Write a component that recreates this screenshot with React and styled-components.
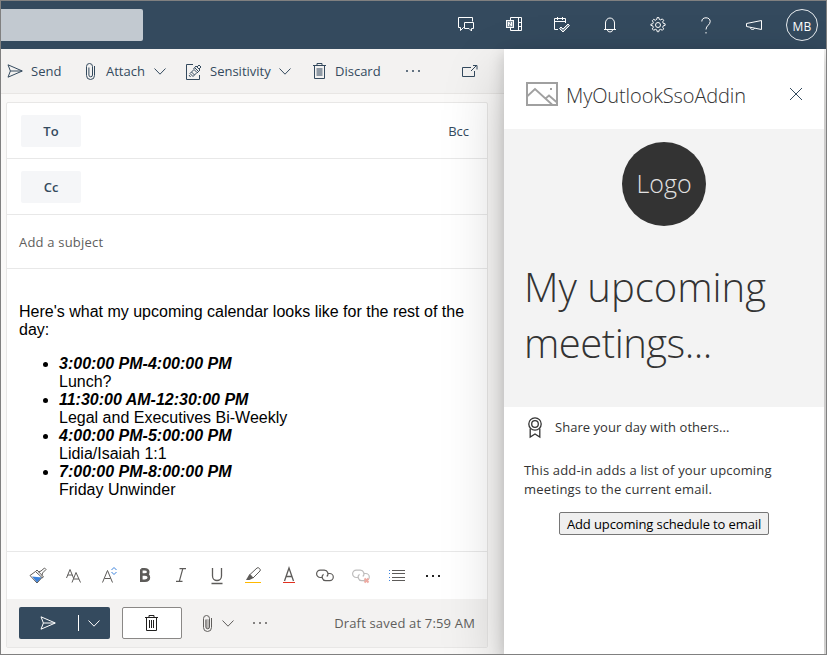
import React from "react";
import styled, { createGlobalStyle } from "styled-components";

const Global = createGlobalStyle`
  * { box-sizing: border-box; }
  body { margin: 0; overflow: hidden; }
  button { font: inherit; padding: 0; border: 0; background: none; color: inherit; }
`;

const Frame = styled.div`
  width: 827px;
  height: 655px;
  border: 1px solid #808080;
  display: flex;
  flex-direction: column;
  overflow: hidden;
  background: #faf9f8;
  color: #344a5e;
  font-family: "Open Sans", "Noto Sans", sans-serif;
  font-size: 13px;
`;
const Header = styled.header`
  height: 48px;
  flex: none;
  background: #344a5e;
  display: flex;
  align-items: center;
  justify-content: space-between;
`;
const SearchBox = styled.div`
  width: 142px;
  height: 32px;
  border-radius: 0 2px 2px 0;
  background: #c2c9d0;
`;
const HeaderIcons = styled.nav`display: flex;`;
const HeaderButton = styled.button`
  width: 48px;
  height: 48px;
  display: flex;
  align-items: center;
  justify-content: center;
  color: #fff;
`;
const Avatar = styled.span`
  width: 32px;
  height: 32px;
  border: 1px solid #e9edf0;
  border-radius: 50%;
  font-size: 12px;
  line-height: 33px;
  text-align: center;
  letter-spacing: 0.2px;
`;
const Main = styled.main`
  flex: 1;
  min-height: 0;
  display: flex;
`;
const Compose = styled.section`
  width: 503px;
  flex: none;
  display: flex;
  flex-direction: column;
`;
const CommandBar = styled.div`
  height: 45px;
  flex: none;
  display: flex;
  align-items: center;
  padding-left: 6px;
  background: #f3f2f1;
  border-bottom: 1px solid #e8e6e4;
`;
const Command = styled.button`
  width: ${(p) => p.$w}px;
  height: 44px;
  display: flex;
  align-items: center;
  flex: none;
`;
const CommandLabel = styled.span`
  width: ${(p) => p.$w}px;
  margin-left: ${(p) => p.$gap}px;
  text-align: left;
  white-space: nowrap;
  line-height: 18px;
`;
const Svg = styled.svg`
  display: block;
  flex: none;
  fill: none;
  stroke: currentColor;
  stroke-width: 1;
  overflow: visible;
`;
const Card = styled.div`
  width: 482px;
  height: 546px;
  margin: 8px 0 0 5px;
  border: 1px solid #e8e7e6;
  border-radius: 2px;
  background: #fff;
  display: flex;
  flex-direction: column;
`;
const FieldRow = styled.div`
  height: ${(p) => p.$h}px;
  flex: none;
  border-bottom: 1px solid #e8e8e8;
  display: flex;
  align-items: center;
  justify-content: space-between;
  padding: 0 18px 0 ${(p) => p.$left}px;
`;
const Recipient = styled.button`
  width: 60px;
  height: 32px;
  border-radius: 2px;
  background: #f5f6f8;
  font-weight: 600;
`;
const Subject = styled.span`
  color: #605e5c;
  letter-spacing: 0.2px;
`;
const Message = styled.article`
  flex: 1;
  padding: 34px 12px 0;
  border-bottom: 1px solid #e8e8e8;
  color: #000;
  font: 16px/18px "Liberation Sans", Arial, sans-serif;
`;
const Intro = styled.p`margin: 0 0 16px;`;
const Meetings = styled.ul`margin: 0; padding-left: 40px;`;
const When = styled.strong`display: block; font-style: italic;`;
const FormatBar = styled.div`
  height: 47px;
  flex: none;
  display: flex;
  align-items: center;
  padding-left: 13px;
  color: #5d5b59;
`;
const FormatButton = styled.button`
  width: 35.9px;
  height: 47px;
  display: flex;
  align-items: center;
  justify-content: center;
`;
const Footer = styled.footer`
  height: 48px;
  flex: none;
  display: flex;
  align-items: center;
  padding: 0 12px;
  background: #f3f2f1;
  color: #605e5c;
`;
const SendButton = styled.button`
  width: 91px;
  height: 32px;
  display: flex;
  align-items: center;
  padding-left: 21px;
  border-radius: 2px;
  background: #344a5e;
  color: #fff;
`;
const SendDivider = styled.span`
  width: 1px;
  height: 16px;
  margin: 0 9px 0 22px;
  background: #fff;
`;
const DiscardButton = styled.button`
  width: 60px;
  height: 32px;
  margin: 0 21px 0 12px;
  border: 1px solid #8a8886;
  border-radius: 2px;
  background: #fff;
  color: #201f1e;
  display: flex;
  align-items: center;
  justify-content: center;
  padding-right: 1px;
`;
const FooterItem = styled.button`
  width: ${(p) => p.$w}px;
  height: 32px;
  display: flex;
  align-items: center;
`;
const DraftStatus = styled.span`
  margin-left: auto;
  letter-spacing: 0.17px;
`;
const AddinPane = styled.aside`
  position: relative;
  width: 320px;
  flex: none;
  background: #fff;
  color: #333;
  box-shadow: 0 25.6px 57.6px rgba(0, 0, 0, 0.22), 0 4.8px 14.4px rgba(0, 0, 0, 0.18);
  clip-path: inset(-48px -3px 0 -80px);
`;
const PaneHeader = styled.div`
  height: 80px;
  display: flex;
  align-items: center;
  padding: 10px 22px 0 22px;
`;
const PaneTitle = styled.h2`
  flex: 1;
  margin: 4px 0 0 8px;
  font-size: 20px;
  line-height: 28px;
  font-weight: 300;
  letter-spacing: -0.12px;
  white-space: nowrap;
`;
const CloseButton = styled.button`color: #344a5e;`;
const Welcome = styled.div`
  height: 278px;
  background: #f3f3f3;
  padding: 13px 20px 0;
`;
const Logo = styled.div`
  width: 84px;
  height: 84px;
  margin: 0 auto;
  border-radius: 50%;
  background: #333;
  color: #e2e2e2;
  font-size: 25px;
  font-weight: 300;
  line-height: 82px;
  text-align: center;
`;
const Title = styled.h1`
  margin: 33px 0 0;
  font-size: 40px;
  line-height: 56px;
  font-weight: 300;
  white-space: nowrap;
`;
const TitleLine = styled.span`
  display: block;
  letter-spacing: ${(p) => p.$ls}px;
`;
const Feature = styled.div`
  height: 40px;
  padding-left: 24px;
  display: flex;
  align-items: center;
`;
const FeatureText = styled.span`
  margin-left: 13px;
  letter-spacing: 0.04px;
`;
const Description = styled.p`
  margin: 14px 20px 13px;
  line-height: 19px;
  white-space: nowrap;
  letter-spacing: 0.17px;
`;
const AddButton = styled.button`
  display: block;
  width: 210px;
  height: 23px;
  margin: 0 auto;
  padding-top: 1px;
  border: 1px solid #767676;
  border-radius: 2px;
  background: #efefef;
  color: #000;
  line-height: 20px;
  letter-spacing: -0.12px;
  white-space: nowrap;
`;

const Icon = ({ w = 16, h = 16, children }) => (
  <Svg width={w} height={h} viewBox={`0 0 ${w} ${h}`}>{children}</Svg>
);
const SendIcon = () => (
  <Icon h={14}><path d="M1 .8 15.3 7 1 13.2 3.4 7ZM3.4 7H15" /></Icon>
);
const Chevron = () => <Icon w={12} h={7}><path d="m.5.5 5.5 5.7L11.5.5" /></Icon>;
const Clip = ({ filled }) => (
  <Icon w={9} h={17}>
    {filled && <rect x="2.5" y="4" width="4" height="10" rx="2" fill="#bdbbb9" stroke="none" />}
    <path d="M8.5 3v9.5a4 4 0 0 1-8 0V3.5a3 3 0 0 1 6 0V12a1.8 1.8 0 0 1-3.6 0V4.5" />
  </Icon>
);
const Dots = ({ strong }) => (
  <Icon h={2}>
    <path stroke={strong ? "#222" : "currentColor"} strokeWidth={strong ? 2 : 1.6} d="M1 1h2M7 1h2M13 1h2" />
  </Icon>
);
const Sensitivity = () => (
  <Icon w={16} h={17}>
    <path d="M7 1.5H.5v15h13V12M4 10.5l4-4 3 3-4 4ZM5.5 9l3 3M3 12l1.5 2M7.5 6 10 3l1 1 2-2 2 2-2 2 1 1-3 3M9 5l3.5 3.5M11 4l2 2" />
  </Icon>
);
const TrashFilled = () => (
  <Icon w={13} h={16}>
    <rect x="3.5" y="5" width="6" height="8" fill="#8f9aa5" stroke="none" />
    <path d="M0 2.5h13M4 2.5V.5h5v2M1.5 2.5v13h10v-13" />
  </Icon>
);
const Trash = () => (
  <Icon w={13} h={16}><path d="M0 2.5h13M4 2.5V.5h5v2M1.5 2.5v13h10v-13M4.5 5v8M6.5 5v8M8.5 5v8" /></Icon>
);
const PopOut = () => (
  <Icon w={16} h={12}><path d="M9 2.5H.5v9h12V6M9 6l5.5-5.5M11 .5h4v4" /></Icon>
);
const Chat = () => (
  <Icon><path d="M6 10.5H5.5L2.5 13.5V10.5H.5v-10h14v4M6.5 5.5h9v6h-2V14l-2.5-2.5H6.5Z" /></Icon>
);
const OneNote = () => (
  <Icon>
    <path d="M4.5 4V.5h11v13h-11V11M12.5.5v13M12.5 5.5h3M12.5 9.5h3" />
    <rect x=".5" y="3.5" width="7" height="7" fill="#8594a0" />
    <path d="M2.5 9V5l3 4V5" />
  </Icon>
);
const Calendar = () => (
  <Icon>
    <path d="M4 12.5H.5v-11h11V6M.5 4.5h11M3.5 0v3M8.5 0v3" />
    <path d="m5.5 11.5 1.5-1.5 2 2 5-5 1.5 1.5L9 15Z" fill="#8594a0" />
  </Icon>
);
const Bell = () => (
  <Icon w={14} h={16}><path d="M1 12.5h12M2.5 12.5V6a4.5 5 0 0 1 9 0v6.5M4.5 13a2.5 2 0 0 0 5 0" /></Icon>
);
const Gear = () => (
  <Icon>
    <circle cx="8" cy="8" r="2.5" />
    <path d="m6.8 2.3.4-1.800h1.600l.4 1.800 1.500.6 1.600-1 1.400 1.400-1 1.600.6 1.500 1.800.4v1.600l-1.800.4-.6 1.500 1 1.600-1.400 1.400-1.600-1-1.500.6-.4 1.800H7.200l-.4-1.800-1.500-.6-1.600 1-1.400-1.400 1-1.600-.6-1.500-1.800-.4V7.200l1.800-.4.6-1.500-1-1.600 1.400-1.400 1.600 1Z" />
  </Icon>
);
const Question = () => (
  <Icon w={10} h={17}>
    <path d="M.8 4.5C.8 2 2.5.8 5 .8s4.200 1.400 4.200 3.700C9.200 8 5 8.500 5 12.500M5 15v1.500" />
  </Icon>
);
const Megaphone = () => (
  <Icon h={10}><path d="M.5 3.5 15.5.5v9L.5 6.5ZM4.5 7.5c0 1.300.8 2 2 2s2-.5 2-1.500" /></Icon>
);
const ImageIcon = () => (
  <Icon w={32} h={24}>
    <g stroke="#a0a0a0" strokeWidth="2">
      <path d="M1 1h30v22H1Z" />
      <path strokeWidth="1.8" d="M1 14.5 9 7l17 15.500M19 17l4-3.500 8 7" />
      <path d="M24 7h2" />
    </g>
  </Icon>
);
const Ribbon = () => (
  <Icon w={14} h={21}>
    <g strokeWidth="1.3">
      <circle cx="7" cy="7" r="6.2" /><circle cx="7" cy="7" r="3.3" />
      <path d="M2.2 11.5v8.500L7 17l4.800 3v-8.500" />
    </g>
  </Icon>
);
const Painter = () => (
  <Icon w={18} h={17}>
    <path d="m3 9.500 10 1L8 15.500Z" fill="#3b82dc" stroke="none" />
    <path d="M6.500 4.500 1 8.500l7 7.500 5-5.500ZM8 3l6.500 7M8 3 6.500 4.500M14.500 10 13 11M9.500 5 12 4l3.500-3 1.500 1.500L13.500 6 13 8.500" />
  </Icon>
);
const FontFace = () => (
  <Icon w={15} h={14}>
    <path d="m.5 9 3.500-8.500L7.500 9M1.800 6h4.500M6 13.500l4-10 4.500 10M7.500 10h5.500" />
  </Icon>
);
const FontSize = () => (
  <Icon w={16} h={18}>
    <path d="M.5 15.500 5.500 3.500l5 12M2.500 11.500h6" />
    <path stroke="#3b82dc" d="m9.500 3 2.500-2.500L14.500 3M9.500 5l2.500 2.500L14.500 5" />
  </Icon>
);
const Bold = () => (
  <Icon w={14} h={16}>
    <path strokeWidth="2.6" d="M2.300 1.300h3.200c5 0 5 5.200 0 5.200H2.300M2.300 6.500H6c5.200 0 5.200 6.200 0 6.200H2.300V1.300" />
  </Icon>
);
const Italic = () => <Icon w={12} h={16}><path strokeWidth="1.2" d="M3.500.7H10M0 13.300h6.500M6.800.7 3.300 13.300" /></Icon>;
const Underline = () => (
  <Icon w={12} h={16}><path strokeWidth="1.3" d="M1.500 0v8a4.500 4.500 0 0 0 9 0V0M.5 15.500h11" /></Icon>
);
const Highlighter = () => (
  <Icon w={16} h={17}>
    <path d="m5 7.500 7-6.500q1-1 2.500.5T15 4L8 11Z" />
    <path d="m1 13 3.500-6 4 4-4 2Z" fill="currentColor" stroke="none" />
    <path stroke="#ffb900" d="M0 15.500h16" />
  </Icon>
);
const FontColor = () => (
  <Icon w={12} h={17}>
    <path strokeWidth="1.3" d="M1.500 14 6 1l4.500 13M3 9.500h6" />
    <path stroke="#e2301f" d="M0 15.500h12" />
  </Icon>
);
const Link = ({ removed }) => (
  <Icon w={18} h={14}>
    <g opacity={removed ? 0.4 : 1}>
      <path strokeWidth="1.2" d="M6.500 8.500H4.300a3.700 3.700 0 0 1 0-7.400h4a3.700 3.700 0 0 1 2.500 6.400M11.500 4.500h2.200a3.600 3.600 0 0 1 0 7.200h-4A3.600 3.600 0 0 1 7.500 5.300" />
    </g>
    {removed && <path stroke="#edaaa2" strokeWidth="2" d="m12.500 9.500 4 4M16.500 9.500l-4 4" />}
  </Icon>
);
const List = () => (
  <Icon w={16} h={11}>
    <path d="M3 .5h13M3 3.500h13M3 7.500h13M3 10.500h13" />
    <path stroke="#3b82dc" d="M0 .5h1M0 3.500h1M0 7.500h1M0 10.500h1" />
  </Icon>
);
const Close = () => <Icon w={12} h={12}><path d="m0 0 12 12M12 0 0 12" /></Icon>;

const headerIcons = [Chat, OneNote, Calendar, Bell, Gear, Question, Megaphone];
const formatIcons = [
  Painter, FontFace, FontSize, Bold, Italic, Underline, Highlighter, FontColor, Link,
  () => <Link removed />, List, () => <Dots strong />,
];
const meetings = [
  ["3:00:00 PM-4:00:00 PM", "Lunch?"],
  ["11:30:00 AM-12:30:00 PM", "Legal and Executives Bi-Weekly"],
  ["4:00:00 PM-5:00:00 PM", "Lidia/Isaiah 1:1"],
  ["7:00:00 PM-8:00:00 PM", "Friday Unwinder"],
];

export default function App() {
  return (
    <Frame>
      <Global />
      <Header>
        <SearchBox />
        <HeaderIcons>
          {headerIcons.map((Glyph, i) => <HeaderButton key={i}><Glyph /></HeaderButton>)}
          <HeaderButton><Avatar>MB</Avatar></HeaderButton>
        </HeaderIcons>
      </Header>
      <Main>
        <Compose>
          <CommandBar>
            <Command $w={79}><SendIcon /><CommandLabel $gap={8}>Send</CommandLabel></Command>
            <Command $w={100}><Clip /><CommandLabel $gap={11} $w={48}>Attach</CommandLabel><Chevron /></Command>
            <Command $w={127}><Sensitivity /><CommandLabel $gap={8} $w={69}>Sensitivity</CommandLabel><Chevron /></Command>
            <Command $w={92}><TrashFilled /><CommandLabel $gap={9}>Discard</CommandLabel></Command>
            <Command $w={57}><Dots /></Command>
            <Command $w={16}><PopOut /></Command>
          </CommandBar>
          <Card>
            <FieldRow $h={56} $left={14}><Recipient>To</Recipient><span>Bcc</span></FieldRow>
            <FieldRow $h={56} $left={14}><Recipient>Cc</Recipient></FieldRow>
            <FieldRow $h={54} $left={12}><Subject>Add a subject</Subject></FieldRow>
            <Message>
              <Intro>Here's what my upcoming calendar looks like for the rest of the day:</Intro>
              <Meetings>
                {meetings.map(([time, name]) => <li key={time}><When>{time}</When>{name}</li>)}
              </Meetings>
            </Message>
            <FormatBar>
              {formatIcons.map((Glyph, i) => <FormatButton key={i}><Glyph /></FormatButton>)}
            </FormatBar>
            <Footer>
              <SendButton><SendIcon /><SendDivider /><Chevron /></SendButton>
              <DiscardButton><Trash /></DiscardButton>
              <FooterItem $w={19}><Clip filled /></FooterItem>
              <FooterItem $w={30}><Chevron /></FooterItem>
              <FooterItem $w={16}><Dots /></FooterItem>
              <DraftStatus>Draft saved at 7:59 AM</DraftStatus>
            </Footer>
          </Card>
        </Compose>
        <AddinPane>
          <PaneHeader>
            <ImageIcon />
            <PaneTitle>MyOutlookSsoAddin</PaneTitle>
            <CloseButton><Close /></CloseButton>
          </PaneHeader>
          <Welcome>
            <Logo>Logo</Logo>
            <Title>
              <TitleLine $ls={0}>My upcoming</TitleLine>
              <TitleLine $ls={-0.5}>meetings...</TitleLine>
            </Title>
          </Welcome>
          <Feature><Ribbon /><FeatureText>Share your day with others...</FeatureText></Feature>
          <Description>This add-in adds a list of your upcoming<br />meetings to the current email.</Description>
          <AddButton>Add upcoming schedule to email</AddButton>
        </AddinPane>
      </Main>
    </Frame>
  );
}
